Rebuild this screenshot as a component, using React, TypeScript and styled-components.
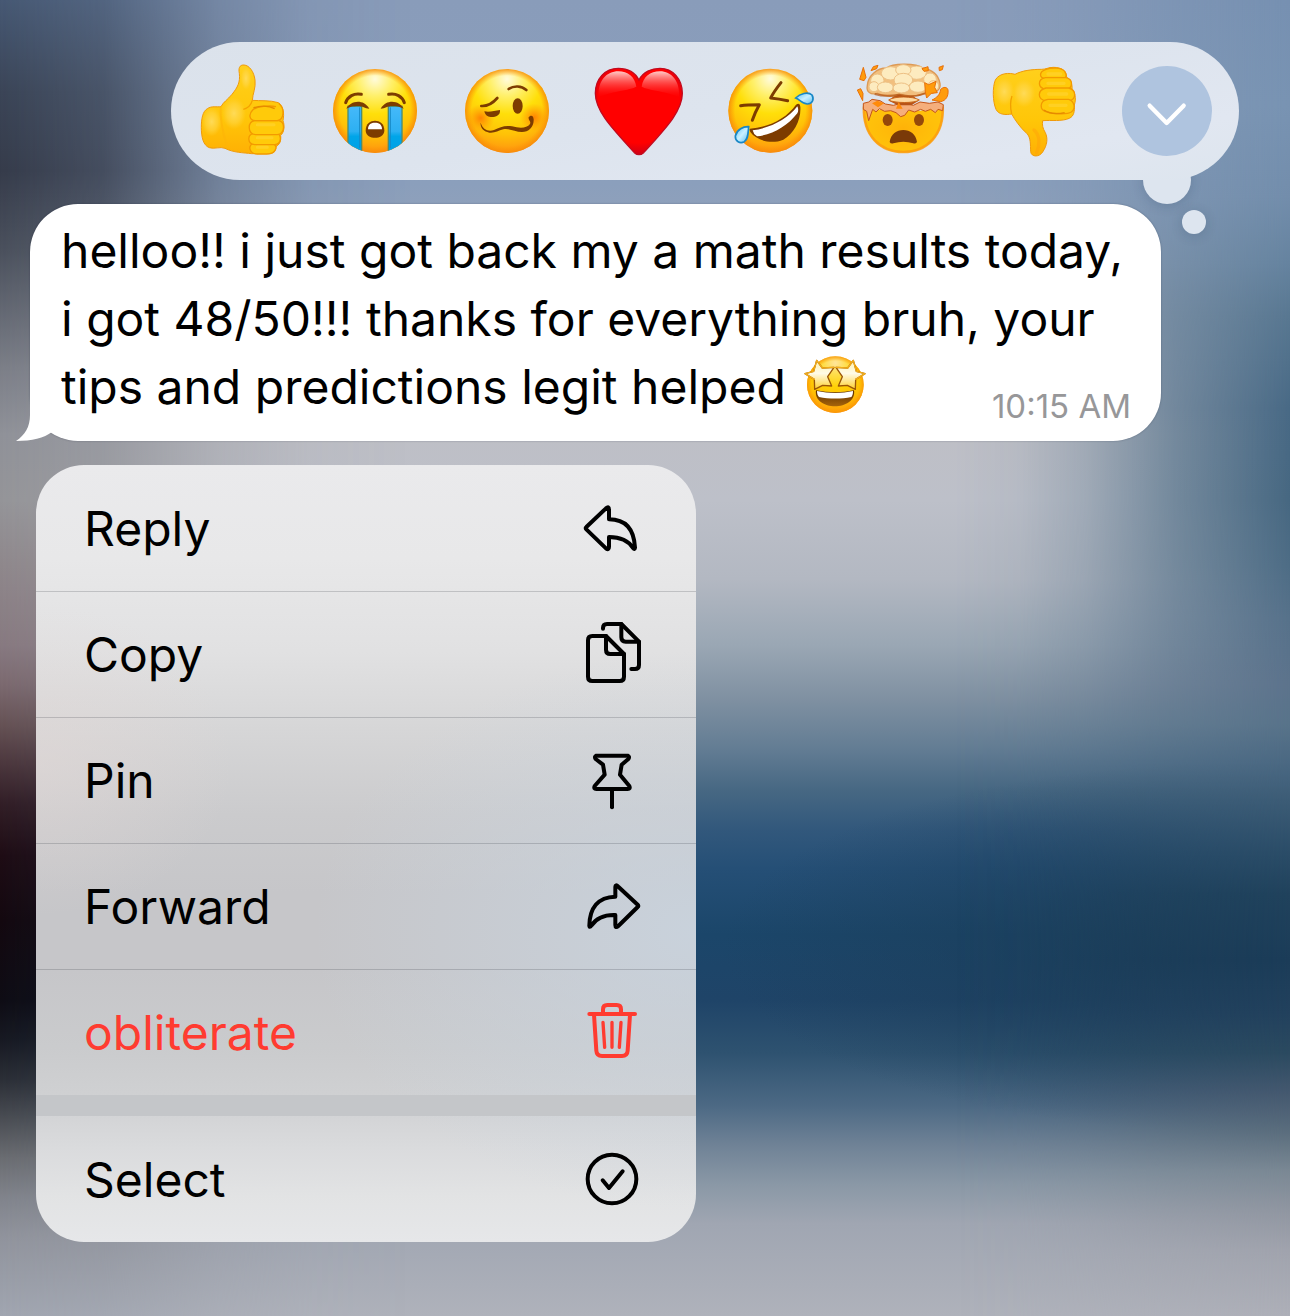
import React from 'react';
import styled, { createGlobalStyle } from 'styled-components';

const GlobalStyle = createGlobalStyle`
  *, *::before, *::after { box-sizing: border-box; }
  body {
    margin: 0;
    font-family: Inter, "Noto Sans", sans-serif;
    color: #000;
  }
`;

/* ---------- layout ---------- */

const Screen = styled.main`
  position: relative;
  isolation: isolate;
  display: flex;
  flex-direction: column;
  align-items: flex-start;
  gap: 24px;
  min-height: 100vh;
  padding: 42px 51px 74px 30px;
  overflow: hidden;
  background: linear-gradient(
    180deg,
    #899cba 0%, #8b9fbc 14%, #9aa5b8 22%, #bebfc6 33%, #bdc0c9 38%, #b3b8c2 44%,
    #9aa7b4 49%, #8091a2 53%, #627c93 57%, #476883 60%, #32587c 63%, #254f76 66%,
    #1b466a 71%, #1f4468 76%, #2e5270 80%, #4c6984 84%, #6f8296 87%, #8a98a6 90%,
    #a0a6b2 93%, #afb2bb 100%
  );
`;

const Shade = styled.div<{ $side: 'left' | 'right' | 'corner' }>`
  position: absolute;
  inset: 0;
  z-index: -2;
  pointer-events: none;
  ${({ $side }) =>
    $side === 'left' &&
    `background: linear-gradient(180deg,
        #465873 0%, #3a4456 7%, #353b4a 13%, #4a505c 19%, #7b7e87 28%, #8f9198 33%,
        #949498 38%, #8e878b 43%, #877980 49%, #7b696f 52%, #665255 55%, #4c373d 58%,
        #321e26 61%, #1e0c14 65%, #13080f 70%, #0e0c14 76%, #171922 79%, #2b2e36 82%,
        #4a4d53 85%, #6a6c71 88%, #80838b 91%, #90939c 94%, #a0a5b0 100%);
     mask-image: linear-gradient(90deg, #000 0%, rgba(0,0,0,.82) 8%, rgba(0,0,0,.3) 17%, rgba(0,0,0,.08) 24%, transparent 32%);`}
  ${({ $side }) =>
    $side === 'right' &&
    `background: linear-gradient(180deg,
        #7690b1 0%, #7893b2 8%, #728dab 15%, #65839f 20%, #587791 24%, #486985 31%,
        #466781 38%, #4d6c85 43%, #56718a 47%, #5c738c 52%, #58738a 55%, #4a6882 58%,
        #3b5b75 61%, #2a4c67 65%, #20425c 68%, #1b3c58 73%, #22415d 77%, #2b4a60 80%,
        #44586f 83%, #5a6d7d 86%, #7a8894 89%, #9096a1 92%, #a0a3ad 95%, #adafb8 100%);
     mask-image: linear-gradient(90deg, transparent 74%, rgba(0,0,0,.06) 79%, rgba(0,0,0,.24) 84%, rgba(0,0,0,.62) 91%, #000 100%);`}
  ${({ $side }) =>
    $side === 'corner' &&
    `background: radial-gradient(ellipse 40% 14% at 96% 72%, rgba(27,60,86,.9), rgba(27,60,86,0));`}
`;

/* ---------- reactions ---------- */

const ReactionBar = styled.div`
  position: relative;
  align-self: flex-end;
  display: flex;
  align-items: center;
  height: 138px;
  padding: 0 6px;
  border-radius: 69px;
  background: linear-gradient(170deg, #dbe2eb 0%, #dde4ee 50%, #e1e7f1 80%, #dde5ee 100%);

  &::before,
  &::after {
    content: '';
    position: absolute;
    z-index: -1;
    border-radius: 50%;
    background: #dde5ef;
    box-shadow: 0 2px 12px rgba(30, 50, 80, 0.18);
  }
  &::before {
    right: 48px;
    bottom: -24px;
    width: 48px;
    height: 48px;
  }
  &::after {
    right: 33px;
    bottom: -54px;
    width: 24px;
    height: 24px;
  }
`;

const PlainButton = styled.button`
  margin: 0;
  padding: 0;
  border: 0;
  background: none;
  color: inherit;
  font: inherit;
  cursor: pointer;
`;

const ReactionButton = styled(PlainButton)`
  display: grid;
  place-items: center;
  width: 132px;
  height: 96px;

  svg {
    display: block;
    width: 96px;
    height: 96px;
  }
`;

const MoreDisc = styled.span`
  display: block;
  width: 90px;
  height: 90px;
  border-radius: 50%;
  background: #afc4df;

  svg {
    width: 90px;
    height: 90px;
  }
`;

/* ---------- message ---------- */

const Bubble = styled.article`
  position: relative;
  max-width: 1131px;
  padding: 13px 30px 20px 31px;
  border-radius: 48px;
  background: #fff;
  box-shadow: 0 0 2px rgba(20, 30, 50, 0.35);
`;

const Tail = styled.svg`
  position: absolute;
  left: -14px;
  bottom: 0;
  width: 52px;
  height: 60px;
`;

const MessageText = styled.p`
  display: flow-root;
  margin: 0;
  font-size: 48px;
  line-height: 68px;
`;

const InlineEmoji = styled.svg`
  width: 64px;
  height: 64px;
  margin-left: 4px;
  vertical-align: -13px;
`;

const SentAt = styled.time`
  float: right;
  margin-top: 38px;
  font-size: 33px;
  line-height: 30px;
  color: #979799;
`;

/* ---------- context menu ---------- */

const Menu = styled.ul`
  list-style: none;
  width: 660px;
  max-width: 100%;
  margin: 0 0 0 6px;
  padding: 0;
  border-radius: 48px;
  overflow: hidden;
  background:
    radial-gradient(ellipse 58% 36% at 100% 60%, rgba(202, 214, 226, 0.75), rgba(202, 214, 226, 0)),
    radial-gradient(ellipse 30% 20% at 0% 38%, rgba(226, 216, 214, 0.55), rgba(226, 216, 214, 0)),
    linear-gradient(
      180deg,
      #eaeaec 0%, #e8e8e9 12%, #e1e1e2 24%, #d6d6d7 34%, #cbcbcd 45%, #c6c6c9 55%,
      #c6c6c9 65%, #cacbcd 75%, #d0d1d3 82%, #dadbdd 88%, #e2e3e4 94%, #e6e7e9 100%
    );
`;

const MenuGap = styled.li`
  height: 21px;
  background: #c4c6c9;
`;

const MenuButton = styled(PlainButton)<{ $danger?: boolean; $divided?: boolean }>`
  display: flex;
  align-items: center;
  justify-content: space-between;
  width: 100%;
  height: 126px;
  padding: 0 52px 0 48px;
  font-size: 48px;
  color: ${({ $danger }) => ($danger ? '#ff3b30' : '#000')};
  box-shadow: ${({ $divided }) => ($divided ? 'inset 0 1px 0 rgba(40, 45, 55, 0.2)' : 'none')};

  svg {
    width: 64px;
    height: 64px;
    fill: none;
    stroke: currentColor;
    stroke-width: 12;
    stroke-linecap: round;
    stroke-linejoin: round;
  }
`;

/* ---------- emoji drawings ---------- */

const BROWN = '#7d3c00';

const HiddenDefs = styled.svg`
  position: absolute;
  width: 0;
  height: 0;
`;

const EmojiDefs = () => (
  <HiddenDefs aria-hidden="true">
    <defs>
      <radialGradient id="face" cx="0.5" cy="0.12" r="0.92">
        <stop offset="0" stopColor="#fffbdc" />
        <stop offset="0.22" stopColor="#fff06a" />
        <stop offset="0.45" stopColor="#ffdf0a" />
        <stop offset="0.72" stopColor="#ffc107" />
        <stop offset="1" stopColor="#ff8a12" />
      </radialGradient>
      <radialGradient id="rim" cx="0.5" cy="0.5" r="0.5">
        <stop offset="0.84" stopColor="#ff9500" stopOpacity="0" />
        <stop offset="1" stopColor="#f58a0c" stopOpacity="0.85" />
      </radialGradient>
      <radialGradient id="blush" cx="0.5" cy="0.5" r="0.5">
        <stop offset="0" stopColor="#ff6a00" stopOpacity="0.75" />
        <stop offset="1" stopColor="#ff8a00" stopOpacity="0" />
      </radialGradient>
      <linearGradient id="tear" x1="0" y1="0" x2="0" y2="1">
        <stop offset="0" stopColor="#45b9fa" />
        <stop offset="0.5" stopColor="#2db0f2" />
        <stop offset="0.6" stopColor="#00a5e8" />
        <stop offset="1" stopColor="#009fe6" />
      </linearGradient>
      <linearGradient id="drop" x1="0" y1="0" x2="1" y2="1">
        <stop offset="0" stopColor="#62c6f5" />
        <stop offset="0.5" stopColor="#c8efff" />
        <stop offset="1" stopColor="#5cc0f2" />
      </linearGradient>
      <linearGradient id="gloss" x1="0" y1="0" x2="0" y2="1">
        <stop offset="0" stopColor="#ffe0dc" stopOpacity="0.9" />
        <stop offset="1" stopColor="#ff2a2a" stopOpacity="0" />
      </linearGradient>
      <radialGradient id="heart" cx="0.5" cy="0.4" r="0.62">
        <stop offset="0.75" stopColor="#ff0000" />
        <stop offset="1" stopColor="#c80018" />
      </radialGradient>
      <linearGradient id="hand" x1="0" y1="0" x2="0" y2="1">
        <stop offset="0" stopColor="#ffd01c" />
        <stop offset="0.6" stopColor="#ffc608" />
        <stop offset="1" stopColor="#ffb004" />
      </linearGradient>
      <radialGradient id="handGlow" cx="0.5" cy="0.5" r="0.5">
        <stop offset="0" stopColor="#ffdc5c" stopOpacity="0.95" />
        <stop offset="0.6" stopColor="#ffd645" stopOpacity="0.6" />
        <stop offset="1" stopColor="#ffd23a" stopOpacity="0" />
      </radialGradient>
      <linearGradient id="star" x1="0" y1="0" x2="0" y2="1">
        <stop offset="0" stopColor="#fff3b0" />
        <stop offset="0.45" stopColor="#fffbe6" />
        <stop offset="1" stopColor="#ffd02e" />
      </linearGradient>
      <linearGradient id="grin" x1="0" y1="0" x2="0" y2="1">
        <stop offset="0" stopColor="#5a2c00" />
        <stop offset="1" stopColor="#a8650a" />
      </linearGradient>
      <clipPath id="cryClip">
        <circle cx="615" cy="213" r="126" />
      </clipPath>
    </defs>
  </HiddenDefs>
);

const ThumbsUp = () => (
  <svg viewBox="75 69 288 288" aria-hidden="true">
    <path
      d="M222 75C208 74 205 86 208 100C211 127 203 142 186 163C172 180 160 186 153 200C140 202 125 197 112 206C98 214 94 236 94 262C94 290 99 316 118 323C134 328 150 319 165 325C190 338 220 338 245 341H290C308 343 318 335 318 320C328 314 334 304 332 286C342 278 345 258 339 242C343 222 341 200 325 188C300 180 270 183 247 181C248 160 258 145 255 120C252 95 238 76 222 75Z"
      fill="url(#hand)" stroke="#f09a0a" strokeWidth="3" />
    <ellipse cx="125" cy="245" rx="30" ry="44" fill="url(#handGlow)" />
    <ellipse cx="192" cy="220" rx="36" ry="48" fill="url(#handGlow)" />
    <ellipse cx="228" cy="115" rx="16" ry="34" fill="url(#handGlow)" />
    <path d="M152 200C150 225 156 270 172 322" fill="none" stroke="#fdb409" strokeWidth="6" opacity=".6" />
    <path d="M247 181C244 192 234 204 220 208" fill="none" stroke="#f5a100" strokeWidth="4" />
    <g fill="#ffca0a" stroke="#f39a00" strokeWidth="4">
      <path d="M252 309H300C314 310 320 318 317 327C313 339 305 342 290 342H262C240 342 230 318 252 309Z" />
      <path d="M252 280H318C336 282 336 312 314 314H254C232 312 230 284 252 280Z" />
      <path d="M254 242H326C346 246 346 280 322 284H256C232 280 232 246 254 242Z" />
      <path d="M318 200C300 196 262 198 248 210C236 222 236 240 256 242H322C344 238 344 204 326 190" />
    </g>
    <path d="M250 204C268 196 296 196 314 206" fill="none" stroke="#e58a00" strokeWidth="4" />
    <path d="M262 254H312M262 293H306M262 322H292" stroke="#ffdb4a" strokeWidth="9" strokeLinecap="round" opacity=".4" />
  </svg>
);

const ThumbsDown = () => (
  <svg viewBox="81 99 288 288" aria-hidden="true">
    <path
      d="M165 133C150 128 118 128 106 150C97 172 98 215 108 238C116 255 138 255 155 252C165 270 180 292 200 310C213 322 211 345 212 365C214 382 238 382 248 366C262 345 264 325 256 308C248 295 246 285 248 272C275 270 305 275 328 265C342 258 344 245 343 225C350 205 344 185 336 178C338 160 330 148 320 142C320 122 305 112 280 112C265 112 258 118 245 118C215 118 185 122 165 133Z"
      fill="url(#hand)" stroke="#f09a0a" strokeWidth="3" />
    <ellipse cx="133" cy="185" rx="30" ry="42" fill="url(#handGlow)" />
    <ellipse cx="192" cy="190" rx="34" ry="42" fill="url(#handGlow)" />
    <path d="M155 252C150 230 150 215 156 198" fill="none" stroke="#f2a000" strokeWidth="4" />
    <path d="M222 300C240 315 240 345 230 368" fill="none" stroke="#ff9f0a" strokeWidth="10" opacity=".45" strokeLinecap="round" />
    <g fill="#ffca0a" stroke="#f39a00" strokeWidth="4">
      <path d="M258 118C275 112 304 112 314 124C322 138 318 146 304 146H258C236 144 236 126 258 118Z" />
      <path d="M256 143H318C340 148 340 174 318 178H258C232 174 232 148 256 143Z" />
      <path d="M258 174H326C350 180 350 208 326 213H260C230 208 232 180 258 174Z" />
      <path d="M264 208H326C344 214 348 236 334 246C322 254 280 252 262 246C236 240 238 212 264 208Z" />
    </g>
    <path d="M252 240C268 252 294 252 314 248" fill="none" stroke="#e58a00" strokeWidth="4" />
    <path d="M264 132H302M264 160H312M266 192H320M270 226H318" stroke="#ffdb4a" strokeWidth="10" strokeLinecap="round" opacity=".4" />
  </svg>
);

const Face = ({ cx, cy, r = 126 }: { cx: number; cy: number; r?: number }) => (
  <>
    <circle cx={cx} cy={cy} r={r} fill="url(#face)" />
    <circle cx={cx} cy={cy} r={r} fill="url(#rim)" />
  </>
);

const Sobbing = () => (
  <svg viewBox="471 69 288 288" aria-hidden="true">
    <Face cx={615} cy={213} />
    <g fill="none" stroke={BROWN} strokeWidth="9" strokeLinecap="round">
      <path d="M527 188C533 170 552 158 574 163" />
      <path d="M703 188C697 170 678 158 656 163" />
    </g>
    <g clipPath="url(#cryClip)" stroke="#4b8c74" strokeWidth="4">
      <rect x="534" y="199" width="41" height="150" fill="url(#tear)" />
      <rect x="655" y="199" width="41" height="150" fill="url(#tear)" />
    </g>
    <path d="M569 202V324M661 202V324" stroke="#1789c4" strokeWidth="3" />
    <g fill={BROWN}>
      <path d="M529 206C540 184 578 174 598 206C584 206 578 198 564 198C548 198 542 200 529 206Z" />
      <path d="M701 206C690 184 652 174 632 206C646 206 652 198 666 198C682 198 688 200 701 206Z" />
      <path d="M587 272C587 250 602 242 615 242C628 242 643 250 643 272C642 288 628 293 615 293C602 293 588 288 587 272Z" />
    </g>
    <path d="M594 268C594 252 604 248 615 248C626 248 636 252 636 268Z" fill="#fff" />
  </svg>
);

const Woozy = () => (
  <svg viewBox="867 69 288 288" aria-hidden="true">
    <Face cx={1011} cy={213} />
    <circle cx="932" cy="234" r="42" fill="url(#blush)" />
    <circle cx="1092" cy="232" r="42" fill="url(#blush)" />
    <g fill="none" stroke={BROWN} strokeWidth="8" strokeLinecap="round">
      <path d="M934 198C950 199 968 190 982 174" />
      <path d="M1016 147C1032 136 1054 137 1069 150" />
    </g>
    <path d="M943 214C958 218 974 212 990 210C992 228 974 232 962 231C952 230 946 226 943 214Z" fill={BROWN} />
    <ellipse cx="1043" cy="198" rx="15" ry="23" fill={BROWN} />
    <path
      d="M932 248C938 268 954 276 972 270C990 262 1004 255 1026 259C1048 265 1070 266 1080 252C1084 244 1074 240 1076 232C1080 226 1090 224 1091 238C1092 262 1076 276 1056 276C1034 276 1018 264 1000 268C984 272 974 280 958 278C940 275 930 262 932 248Z"
      fill={BROWN} />
  </svg>
);

const Heart = () => (
  <svg viewBox="63 69 288 288" aria-hidden="true">
    <path
      d="M207 120C195 96 170 85 145 85C105 85 76 116 76 160C76 215 130 268 193 338Q207 350 221 338C284 268 337 215 337 160C337 116 308 85 270 85C245 85 219 96 207 120Z"
      fill="url(#heart)" stroke="#c20a1e" strokeWidth="4" />
    <path d="M86 172C82 122 110 94 145 94C174 94 194 110 199 140C184 150 112 156 86 172Z" fill="url(#gloss)" />
    <path d="M327 172C331 122 303 94 270 94C240 94 220 110 215 140C230 150 301 156 327 172Z" fill="url(#gloss)" />
  </svg>
);

const Rolling = () => (
  <svg viewBox="459 69 288 288" aria-hidden="true">
    <Face cx={601} cy={212} />
    <g fill="none" stroke={BROWN} strokeWidth="9" strokeLinecap="round" strokeLinejoin="round">
      <path d="M512 197C530 194 550 194 568 194C560 208 552 226 547 241" />
      <path d="M633 128C622 142 610 158 602 174C620 176 638 179 653 182" />
    </g>
    <path d="M540 266C596 262 648 236 678 194Q690 186 691 200C694 240 672 282 640 299C604 314 560 302 541 276Q537 268 540 266Z" fill={BROWN} />
    <path d="M548 271C602 264 652 238 682 199C686 206 685 214 682 220C652 258 610 284 561 289Q550 282 548 271Z" fill="#fff" />
    <g fill="url(#drop)" stroke="#1987c6" strokeWidth="5">
      <path d="M677 174C690 161 714 154 726 165C733 178 728 191 712 192C698 192 690 179 677 174Z" />
      <path d="M536 260C520 259 501 268 496 288C495 304 510 312 523 305C535 297 534 280 536 260Z" />
    </g>
  </svg>
);

const Exploding = () => (
  <svg viewBox="855 69 288 288" aria-hidden="true">
    <path d="M880 194C874 286 928 338 1000 338C1072 338 1126 286 1120 194L1092 206L1050 212H950L906 206Z" fill="#ffc20a" />
    <path d="M880 194C874 286 928 338 1000 338C1072 338 1126 286 1120 194L1092 206L1050 212H950L906 206Z" fill="url(#blush)" opacity=".25" />
    <path d="M882 200C878 286 930 336 1000 336C1070 336 1122 286 1118 200" fill="none" stroke="#fb9a10" strokeWidth="8" opacity=".8" />
    <path
      d="M880 190L896 186L906 178L930 182L946 192L970 196L1000 188L1030 196L1050 186L1078 190L1104 186L1120 194L1118 212L1104 208L1096 218L1082 208L1066 214L1052 208L1034 216L1016 210L1004 226L992 230L978 218L962 212L944 214L928 206L918 216L908 208L896 242L890 214L880 208Z"
      fill="#f5ae7c" stroke="#c4551a" strokeWidth="3" strokeLinejoin="round" />
    <path d="M966 150H1036L1030 168L1046 182L1024 196H984L956 182L972 168Z" fill="#b85418" />
    <path d="M956 180C972 168 1030 168 1048 180C1034 190 972 190 956 180Z" fill="#ffd9a0" stroke="#c9681e" strokeWidth="3" />
    <path d="M978 206L986 186L998 206ZM906 190L922 182L942 190L924 202Z" fill="#ff8a0a" />
    <path d="M892 136C888 156 902 166 922 160C944 170 970 172 988 162C1012 170 1046 170 1062 160C1092 164 1114 152 1110 130C1104 100 1082 88 1058 84C1040 70 968 68 950 84C920 84 894 108 892 136Z" fill="#f2bf7e" stroke="#dd9a55" strokeWidth="4" />
    <g fill="#fdebbf" stroke="#edc084" strokeWidth="3">
      <circle cx="922" cy="122" r="20" />
      <circle cx="1080" cy="118" r="19" />
      <ellipse cx="962" cy="100" rx="28" ry="20" />
      <ellipse cx="1040" cy="98" rx="29" ry="20" />
      <ellipse cx="1000" cy="90" rx="23" ry="16" />
      <ellipse cx="1000" cy="120" rx="28" ry="20" />
      <circle cx="912" cy="140" r="15" />
      <ellipse cx="946" cy="142" rx="24" ry="16" />
      <ellipse cx="994" cy="144" rx="25" ry="15" />
      <ellipse cx="1044" cy="140" rx="26" ry="17" />
      <circle cx="1090" cy="138" r="16" />
    </g>
    <path d="M914 162C940 170 966 168 986 164C1010 170 1040 170 1066 160" fill="none" stroke="#b3520f" strokeWidth="6" opacity=".7" />
    <g fill="#ff9c0c" stroke="#e8700a" strokeWidth="3" strokeLinejoin="round">
      <path d="M880 82L888 112L882 122L869 118Z" />
      <path d="M903 92L910 80L924 76L920 86Z" />
      <path d="M862 150L872 146L879 160L878 182Z" />
      <path d="M1056 86L1074 80L1075 92L1062 94Z" />
      <path d="M1107 82L1120 77L1117 89L1108 92Z" />
      <path d="M1064 128L1076 134L1098 124L1094 142L1102 158L1084 160L1070 174L1066 156Z" />
      <path d="M1112 148C1120 140 1132 140 1134 150C1136 168 1128 182 1112 185L1086 180C1100 174 1110 164 1112 148Z" />
    </g>
    <ellipse cx="953" cy="240" rx="15" ry="18" fill="#95480a" />
    <ellipse cx="1047" cy="240" rx="15" ry="18" fill="#95480a" />
    <path d="M959 306C962 282 980 270 1000 270C1020 270 1038 282 1041 306Q1037 312 1030 310C1010 304 990 304 970 310Q962 312 959 306Z" fill="#7a3a08" />
  </svg>
);

const StarStruck = () => (
  <InlineEmoji viewBox="318 72 192 192" role="img" aria-label="star-struck face">
    <Face cx={415} cy={167} r={85} />
    <circle cx="415" cy="167" r="85" fill="#ffb400" opacity=".3" />
    <path d="M357 184C394 192 436 192 471 184C476 214 446 232 414 232C382 232 352 214 357 184Z" fill="url(#grin)" />
    <path d="M360 186C396 194 434 194 468 186C468 196 466 201 463 204C434 210 396 210 366 204C362 200 360 194 360 186Z" fill="#fff" />
    <g fill="url(#star)" stroke="#9a5608" strokeWidth="4" strokeLinejoin="round">
      <path d="M359 94L376 117L411 115L392 143L404 171L377 169L353 181L352 151L324 134L350 127Z" />
      <path d="M469 94L452 117L417 115L436 143L424 171L451 169L475 181L476 151L504 134L478 127Z" />
    </g>
    <g fill="none" stroke="#f3ae1a" strokeWidth="4" strokeLinejoin="round" strokeLinecap="round">
      <path d="M411 115L376 117L359 94L350 127L324 134L352 151" />
      <path d="M417 115L452 117L469 94L478 127L504 134L476 151" />
    </g>
  </InlineEmoji>
);

/* ---------- menu icons ---------- */

const ReplyIcon = () => (
  <svg viewBox="60 48 192 192" aria-hidden="true">
    <path d="M79 141L138 85Q147 77 147 89V118C196 118 222 146 225 203Q224 210 219 204C204 180 180 171 147 171V200Q147 212 138 205L79 148Q75 144 79 141Z" />
  </svg>
);

const CopyIcon = () => (
  <svg viewBox="60 426 192 192" aria-hidden="true">
    <path d="M129 446V444Q129 432 141 432H184L237 485V555Q237 567 225 567H214" />
    <path d="M184 432V472Q184 485 197 485H237" />
    <path d="M138 468H97Q84 468 84 481V590Q84 603 97 603H179Q192 603 192 590V522Z" />
    <path d="M138 468V509Q138 522 151 522H192" />
  </svg>
);

const PinIcon = () => (
  <svg viewBox="60 54 192 192" aria-hidden="true">
    <path d="M109 77H203Q210 80 205 87L185 104L180 134L208 168Q212 177 203 177H109Q100 177 104 168L134 134L129 104L107 87Q102 80 109 77Z" />
    <path d="M156 177V232" />
  </svg>
);

const ForwardIcon = () => (
  <svg viewBox="60 432 192 192" aria-hidden="true">
    <path d="M233 524L175 470Q166 461 166 472V500C114 501 89 534 88 587Q89 594 94 587C110 562 136 554 166 555V585Q166 596 175 588L233 531Q237 528 233 524Z" />
  </svg>
);

const TrashIcon = () => (
  <svg viewBox="60 60 192 192" aria-hidden="true">
    <path d="M88 102H225" />
    <path d="M129 102V88Q129 75 142 75H170Q183 75 183 88V102" />
    <path d="M102 104L109 212Q110 228 126 228H186Q202 228 203 212L210 104" />
    <path d="M129 127L134 202M156 127V202M183 127L178 202" strokeWidth="10" />
  </svg>
);

const SelectIcon = () => (
  <svg viewBox="60 501 192 192" aria-hidden="true">
    <circle cx="156" cy="597" r="73" />
    <path d="M128 601L147 624L188 574" />
  </svg>
);

/* ---------- data ---------- */

const reactions = [
  { label: 'Thumbs up', Art: ThumbsUp },
  { label: 'Loudly crying', Art: Sobbing },
  { label: 'Woozy face', Art: Woozy },
  { label: 'Red heart', Art: Heart },
  { label: 'Rolling on the floor laughing', Art: Rolling },
  { label: 'Exploding head', Art: Exploding },
  { label: 'Thumbs down', Art: ThumbsDown },
];

const actions = [
  { label: 'Reply', Icon: ReplyIcon },
  { label: 'Copy', Icon: CopyIcon, divided: true },
  { label: 'Pin', Icon: PinIcon, divided: true },
  { label: 'Forward', Icon: ForwardIcon, divided: true },
  { label: 'obliterate', Icon: TrashIcon, divided: true, danger: true },
];

export default function App() {
  return (
    <Screen>
      <GlobalStyle />
      <EmojiDefs />
      <Shade $side="corner" />
      <Shade $side="left" />
      <Shade $side="right" />

      <ReactionBar role="toolbar" aria-label="Reactions">
        {reactions.map(({ label, Art }) => (
          <ReactionButton key={label} type="button" aria-label={label}>
            <Art />
          </ReactionButton>
        ))}
        <ReactionButton type="button" aria-label="More reactions">
          <MoreDisc>
            <svg viewBox="486 108 270 270" aria-hidden="true">
              <path d="M569 227L620 279L671 227" fill="none" stroke="#fff" strokeWidth="13" strokeLinecap="round" strokeLinejoin="round" />
            </svg>
          </MoreDisc>
        </ReactionButton>
      </ReactionBar>

      <Bubble>
        <Tail viewBox="0 0 52 60" aria-hidden="true">
          <path d="M14 0V34C14 46 9 54 0 60C16 60 28 57 36 51L46 40V0Z" fill="#fff" />
        </Tail>
        <MessageText>
          <span>helloo!! i just got back my a math results today, </span>
          <span>i got 48/50!!! thanks for everything bruh, your </span>
          <span>tips and predictions legit helped </span>
          <StarStruck />
          <SentAt dateTime="10:15">10:15 AM</SentAt>
        </MessageText>
      </Bubble>

      <Menu>
        {actions.map(({ label, Icon, danger, divided }) => (
          <li key={label}>
            <MenuButton type="button" $danger={danger} $divided={divided}>
              {label}
              <Icon />
            </MenuButton>
          </li>
        ))}
        <MenuGap role="separator" />
        <li>
          <MenuButton type="button">
            Select
            <SelectIcon />
          </MenuButton>
        </li>
      </Menu>
    </Screen>
  );
}
